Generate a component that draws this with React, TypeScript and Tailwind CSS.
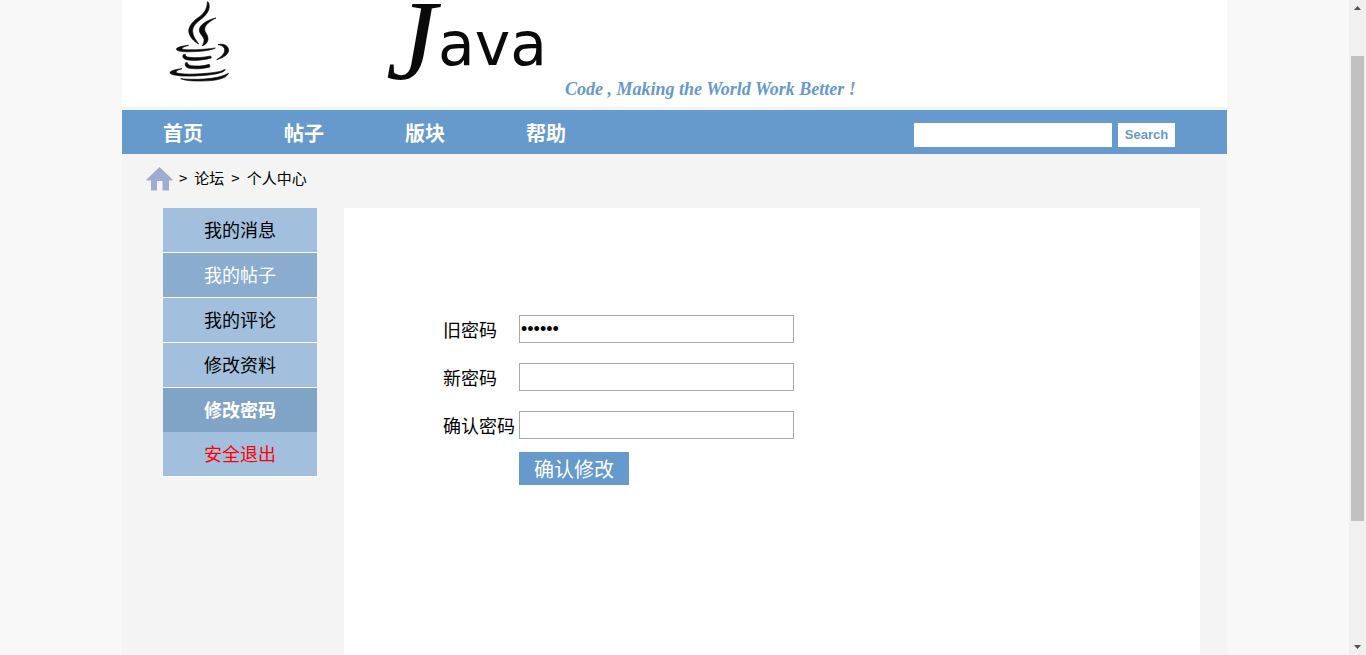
import React, { useState } from 'react';

const NAV_ITEMS = ['首页', '帖子', '版块', '帮助'];

const MENU_ITEMS = [
  { label: '我的消息', style: 'border-b border-white bg-[#a2c0de] text-black' },
  { label: '我的帖子', style: 'border-b border-white bg-[#89accf] text-white' },
  { label: '我的评论', style: 'border-b border-white bg-[#a2c0de] text-black' },
  { label: '修改资料', style: 'border-b border-white bg-[#a2c0de] text-black' },
  { label: '修改密码', style: 'bg-[#7fa4c6] text-white font-bold' },
  { label: '安全退出', style: 'border-b border-white bg-[#a2c0de] text-[#ff0000]' },
];

const Banner: React.FC = () => (
  <header className="bg-white">
    <svg width="760" height="107" viewBox="0 0 760 107" role="img" aria-label="Java">
      <g transform="translate(-2 0) scale(0.3333)" fill="#0a0a0a" stroke="#0a0a0a" strokeWidth="2" strokeLinejoin="round">
        <path d="M262 5C262 30 250 42 232 55C212 70 204 85 207 98C210 112 222 124 236 132C226 118 219 108 218 96C217 82 224 72 240 60C262 43 272 28 266 8Z" />
        <path d="M288 54C265 58 238 74 238 90C238 102 250 108 252 118C253 126 250 132 246 138C258 134 264 126 264 116C264 104 254 98 254 88C254 76 268 64 288 54Z" />
        <path d="M206 136C185 138 168 143 169 148C172 157 210 156 240 154C262 152 280 148 286 144C268 147 250 148 230 149C205 150 188 149 186 146C186 142 196 139 206 136Z" />
        <path d="M294 134C306 130 325 134 326 150C326 164 308 174 290 179C304 170 314 162 314 150C314 140 306 136 294 134Z" />
        <path d="M190 164C186 170 190 178 204 180C225 183 255 180 274 174L272 168C250 173 225 174 208 172C198 171 196 168 196 163Z" />
        <path d="M197 188C193 195 198 203 208 205C228 208 252 206 270 201L268 193C250 199 228 199 214 197C204 195 204 192 202 188Z" />
        <path d="M186 206C165 208 148 213 150 219C156 228 200 230 240 227C275 225 310 220 316 209L312 209C308 214 285 218 245 221C205 224 172 222 168 217C168 212 176 209 186 206Z" />
        <path d="M182 236C220 240 290 240 326 220C318 236 290 243 240 243C210 243 195 241 182 236Z" />
      </g>
      <text x="264" y="79" fontFamily="'Liberation Serif', serif" fontSize="114" fontStyle="italic" fill="#0a0a0a">J</text>
      <text x="316" y="65" fontFamily="'DejaVu Sans', sans-serif" fontSize="60" fill="#0a0a0a">ava</text>
      <text x="443" y="95" fontFamily="'Liberation Serif', serif" fontSize="18" fontStyle="italic" fontWeight="bold" fill="#6699cc">
        Code , Making the World Work Better !
      </text>
    </svg>
  </header>
);

const NavBar: React.FC = () => {
  const [keyword, setKeyword] = useState('');

  return (
    <nav className="mt-[3px] flex h-11 items-center justify-between bg-[#6699cc] pl-[41px] pr-[52px]">
      <ul className="flex pt-0.5">
        {NAV_ITEMS.map((item) => (
          <li key={item} className="w-[121px]">
            <a href="#" className="text-xl font-bold text-white">{item}</a>
          </li>
        ))}
      </ul>
      <form className="mt-1.5 flex gap-1.5" onSubmit={(e) => e.preventDefault()}>
        <input
          type="text"
          aria-label="Search"
          value={keyword}
          onChange={(e) => setKeyword(e.target.value)}
          className="h-6 w-[198px] bg-white px-1 text-sm outline-none"
        />
        <button type="submit" className="h-6 w-[57px] bg-white font-['Liberation_Sans',sans-serif] text-[13px] font-bold text-[#6699cc]">
          Search
        </button>
      </form>
    </nav>
  );
};

const Breadcrumb: React.FC = () => (
  <div className="flex h-[54px] items-center gap-1.5 pb-1 pl-6 text-[15px] text-black">
    <a href="#" aria-label="首页">
      <svg width="27" height="26" viewBox="0 0 27 26" fill="#9dadd0">
        <path d="M13.5 1L26.5 13.5V14.5H23V24.5H16.5V15H11V24.5H5V14.5H0.5V13.5Z" />
      </svg>
    </a>
    <div className="flex gap-[7px] pb-0.5">
      <span>&gt;</span>
      <a href="#">论坛</a>
      <span>&gt;</span>
      <a href="#">个人中心</a>
    </div>
  </div>
);

const SideMenu: React.FC = () => (
  <ul className="w-[154px] shrink-0 text-lg">
    {MENU_ITEMS.map((item) => (
      <li key={item.label}>
        <a href="#" className={`box-content flex h-[42px] items-center justify-center pb-0.5 ${item.style}`}>
          {item.label}
        </a>
      </li>
    ))}
  </ul>
);

const PasswordForm: React.FC = () => {
  const [oldPassword, setOldPassword] = useState('123456');
  const [newPassword, setNewPassword] = useState('');
  const [confirmPassword, setConfirmPassword] = useState('');

  const fields = [
    { id: 'old', label: '旧密码', value: oldPassword, onChange: setOldPassword },
    { id: 'new', label: '新密码', value: newPassword, onChange: setNewPassword },
    { id: 'confirm', label: '确认密码', value: confirmPassword, onChange: setConfirmPassword },
  ];

  return (
    <form className="text-lg text-black" onSubmit={(e) => e.preventDefault()}>
      {fields.map((field) => (
        <div key={field.id} className="mb-5 flex h-7 items-center">
          <label htmlFor={field.id} className="w-[76px]">{field.label}</label>
          <input
            id={field.id}
            type="password"
            value={field.value}
            onChange={(e) => field.onChange(e.target.value)}
            className="h-7 w-[275px] border border-[#a9a9a9] bg-white px-px font-['Liberation_Sans',sans-serif] text-lg outline-none"
          />
        </div>
      ))}
      <button type="submit" className="-mt-[7px] ml-[76px] block h-[33px] w-[110px] bg-[#6699cc] text-xl leading-8 text-white">
        确认修改
      </button>
    </form>
  );
};

const Scrollbar: React.FC = () => (
  <div className="flex w-[17px] shrink-0 flex-col items-center justify-between bg-[#f0f0f0] py-1.5" aria-hidden="true">
    <svg width="7" height="4" viewBox="0 0 7 4" fill="#505050"><path d="M3.5 0L7 4H0Z" /></svg>
    <div className="mt-[46px] mb-[124px] w-[13px] flex-1 bg-[#c1c1c1]" />
    <svg width="7" height="4" viewBox="0 0 7 4" fill="#505050"><path d="M0 0H7L3.5 4Z" /></svg>
  </div>
);

const App: React.FC = () => {
  return (
    <div className="flex min-h-screen bg-[#f8f8f8] font-['Noto_Sans_CJK_SC',sans-serif]">
      <div className="flex flex-1 justify-center">
        <div className="flex w-full max-w-[1105px] flex-col bg-[#f4f4f4]">
          <Banner />
          <NavBar />
          <Breadcrumb />
          <div className="flex flex-1 gap-[27px] pl-[41px] pr-[27px]">
            <SideMenu />
            <main className="flex-1 bg-white pl-[99px] pt-[107px]">
              <PasswordForm />
            </main>
          </div>
        </div>
      </div>
      <Scrollbar />
    </div>
  );
};

export default App;
